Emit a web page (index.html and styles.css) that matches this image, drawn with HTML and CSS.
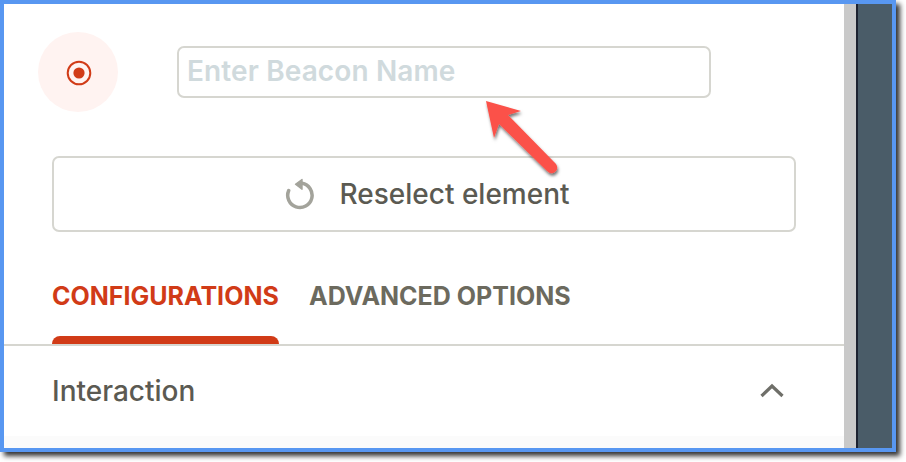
FILE: index.html
```html
<!DOCTYPE html>
<html lang="en">
<head>
<meta charset="utf-8">
<title>Beacon</title>
<link rel="stylesheet" href="styles.css">
</head>
<body>
<div class="frame">
  <main class="panel">
    <div class="name-row">
      <div class="beacon-badge">
        <svg class="beacon-icon" width="26" height="26" viewBox="0 0 26 26"><circle cx="13" cy="13" r="11.3" fill="none" stroke="#d13b17" stroke-width="2"/><circle cx="13" cy="13" r="5.6" fill="#d13b17"/></svg>
      </div>
      <input class="name-input" type="text" placeholder="Enter Beacon Name">
    </div>
    <button class="reselect" type="button">
      <svg class="reselect-icon" width="32" height="32" viewBox="0 0 32 32"><path d="M17 5.300 A12.200 12.200 0 1 1 3.700 12.500" fill="none" stroke="#a3a39b" stroke-width="3.500" stroke-linecap="round"/><path d="M10.500 6.300 L17 1.500 L17 11.200 Z" fill="#a3a39b" stroke="#a3a39b" stroke-width="1.400" stroke-linejoin="round"/></svg>
      <span>Reselect element</span>
    </button>
    <nav class="tabs">
      <div class="tab tab-active">CONFIGURATIONS</div>
      <div class="tab">ADVANCED OPTIONS</div>
    </nav>
    <section class="accordion">
      <span class="accordion-title">Interaction</span>
      <svg class="chevron" width="26" height="16" viewBox="0 0 26 16"><path d="M2.500 13 L13 3 L23.500 13" fill="none" stroke="#6f6f69" stroke-width="3.200"/></svg>
    </section>
    <div class="fade"></div>
  </main>
  <div class="scrollbar"></div>
  <div class="side"></div>
  <svg class="arrow" width="90" height="90" viewBox="0 0 90 90"><defs><filter id="arrow-shadow" x="-20%" y="-20%" width="150%" height="150%"><feDropShadow dx="1" dy="2.500" stdDeviation="1.800" flood-color="#000" flood-opacity=".55"/></filter></defs><path filter="url(#arrow-shadow)" d="M4 3 L39 13 L26 17 L74 66 Q77 71 73 74 Q69 77 65 73 L17 26 L12 40 Z" fill="#fb5148"/></svg>
</div>
</body>
</html>
```
FILE: styles.css
```css
* { box-sizing: border-box; }
html, body { margin: 0; padding: 0; width: 906px; height: 462px; overflow: hidden; background: #fff; }
body { font-family: Inter, "Liberation Sans", sans-serif; }
.frame {
  position: relative;
  display: flex;
  width: 896px;
  height: 452px;
  border: 4px solid #5897f1;
  background: #fff;
  box-shadow: 4px 4px 5px rgba(0, 0, 0, .8);
}
.panel { position: relative; width: 840px; flex: none; overflow: hidden; }
.name-row { display: flex; align-items: center; gap: 59px; height: 80px; margin: 28px 0 0 34px; }
.beacon-badge { display: flex; align-items: center; justify-content: center; width: 80px; height: 80px; padding: 1px 0 0 2px; border-radius: 50%; background: #fff3f1; flex: none; }
.name-input {
  width: 534px; height: 52px; padding: 0 8px 2px;
  border: 2px solid #d6d6d0; border-radius: 7px; outline: none; background: #fff;
  font: 600 28px Inter, sans-serif; letter-spacing: .12px; color: #5b5a52;
}
.name-input::placeholder { color: #d0dadd; opacity: 1; }
.reselect {
  display: flex; align-items: center; justify-content: center; gap: 22px;
  width: 744px; height: 76px; margin: 44px 0 0 48px; padding: 0 0 0 7px;
  border: 2px solid #d6d6d0; border-radius: 7px; background: #fff;
  font: 500 28px Inter, sans-serif; color: #5b5a52;
}
.tabs { display: flex; gap: 30px; height: 112px; margin-left: 48px; }
.tab { padding-top: 49px; height: 112px; font: 700 25px Inter, sans-serif; color: #6c6a5e; white-space: nowrap; }
.tab-active { position: relative; width: 227px; color: #d13b17; }
.tab-active::after { content: ""; position: absolute; left: 0; right: 0; bottom: 0; height: 8px; background: #d13b17; border-radius: 8px 8px 0 0; }
.accordion {
  display: flex; align-items: center; justify-content: space-between;
  height: 91px; padding: 0 59px 0 48px;
  border-top: 2px solid #d6d6d0;
}
.accordion-title { font: 500 28px Inter, sans-serif; color: #5b5a52; }
.fade { position: absolute; left: 0; right: 0; bottom: 0; height: 12px; background: #fbfbfb; }
.scrollbar { width: 12px; flex: none; background: #c9c9c9; }
.side { flex: 1; background: #4a5c68; border-left: 2px solid #1c2230; }
.arrow { position: absolute; left: 478px; top: 94px; }
```
